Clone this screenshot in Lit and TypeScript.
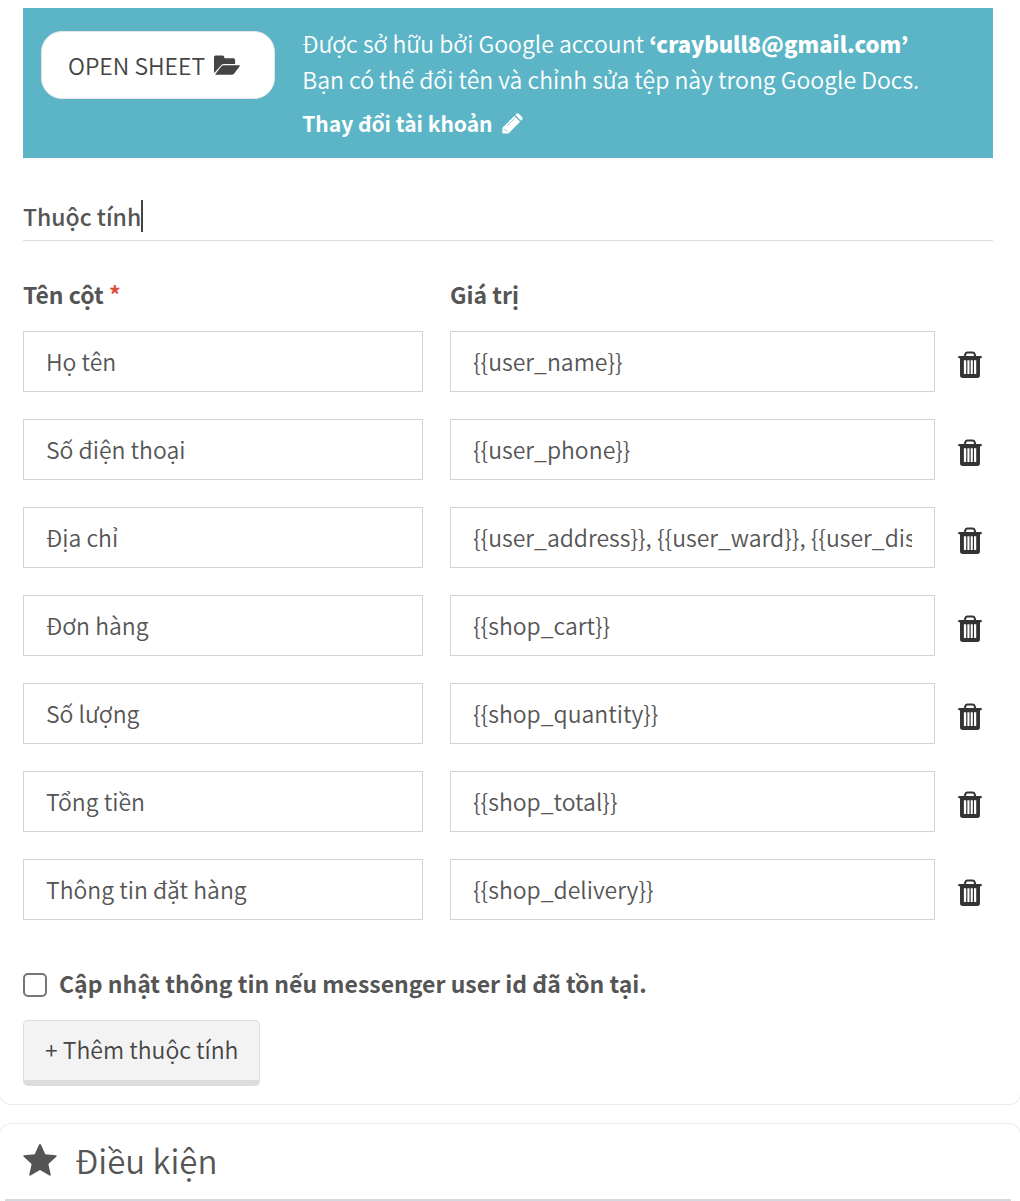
import { LitElement, html, css, svg } from "lit";
import { customElement, state } from "lit/decorators.js";

interface Attribute {
  name: string;
  value: string;
}

const folderIcon = html`<svg class="icon-folder" viewBox="0 0 26 20" aria-hidden="true">
  ${svg`<path fill="currentColor" d="M0 2Q0 .4 1.600.4H8.300Q9.700.4 10.100 1.800L10.500 3.300H19.500Q21.100 3.300 21.100 4.900V9H10.200Q8.200 9 6.900 10.400L.5 17.700Q0 18 0 17.300zM9.600 10.300H25.300Q26.300 10.300 25.700 11.300L20.400 18.300Q19.200 19.800 17.600 19.800H1.500Q1 19.800 1.300 19.300L7.200 11.600Q8.200 10.300 9.600 10.300z"/>`}
</svg>`;

const pencilIcon = html`<svg class="icon-pencil" viewBox="0 0 21 21" aria-hidden="true">
  ${svg`<path fill="currentColor" d="M12.300 2.900 18.100 8.700 6.800 20.200 5.800 20.600H.4V15.200L.9 14.200zM13.300 1.900 14.500.8Q15.700-.2 16.900.9L20.100 4.100Q21.200 5.300 20.200 6.500L19.100 7.700z"/>
  <path fill="none" stroke="#5bb5c6" stroke-width=".7" d="M5.300 12.700 12.700 5.300"/>
  <path fill="#5bb5c6" d="M2.700 15.800 5.300 18.300 4.200 18.500 3.900 17.200 2.500 16.900z"/>`}
</svg>`;

const trashIcon = html`<svg class="icon-trash" viewBox="0 0 24 28" aria-hidden="true">
  ${svg`<path fill="none" stroke="currentColor" stroke-width="2" d="M6.600 5.500 7.600 2.600Q8 1.400 9.200 1.400h5.600q1.200 0 1.600 1.200l1 2.900"/>
  <path fill="currentColor" fill-rule="evenodd" d="M1 5h22q.8 0 .8.8v.7q0 .7-.8.700h-1V24q0 3-2.600 3H4.600Q2 27 2 24V7.200H1q-.8 0-.8-.7v-.7Q.2 5 1 5zM5.900 9.300V23h2.300V9.300zM9.400 9.300V23h2.100V9.300zM12.700 9.300V23h2.100V9.300zM16 9.300V23h2.200V9.300z"/>`}
</svg>`;

const starIcon = html`<svg class="icon-star" viewBox="0 0 34 32" aria-hidden="true">
  ${svg`<path fill="currentColor" d="M17 0Q17.600 0 18 .8L22.300 10.200 32.900 11.300Q34.300 11.600 33.300 12.700L25.400 19.900 27.700 30.600Q27.800 32 26.500 31.500L17 26 7.500 31.500Q6.200 32 6.300 30.600L8.600 19.900.7 12.700Q-.3 11.600 1.100 11.300L11.700 10.200 16 .8Q16.400 0 17 0z"/>`}
</svg>`;

@customElement("app-root")
export class AppRoot extends LitElement {
  static styles = css`
    :host {
      display: block;
      overflow: hidden;
      background: #fff;
      color: #555;
      font: 350 23px/36px "Noto Sans CJK KR", "Noto Sans", sans-serif;
    }
    * {
      box-sizing: border-box;
    }
    button,
    input {
      font: inherit;
      color: inherit;
    }
    button {
      cursor: pointer;
    }
    svg {
      display: block;
      flex: none;
    }
    .card {
      margin: 0 -1px;
      border: 1px solid #ebebeb;
      border-radius: 12px;
    }
    .attributes {
      padding: 8px 27px 18px 23px;
      border-top: 0;
      border-top-left-radius: 0;
      border-top-right-radius: 0;
    }
    .banner {
      display: flex;
      align-items: flex-start;
      gap: 27px;
      padding: 17px 18px;
      background: #5bb5c6;
      color: #fff;
    }
    .open {
      display: flex;
      flex: none;
      align-items: center;
      gap: 9px;
      margin-top: 6px;
      padding: 15px 34px 15px 26px;
      border: 1px solid #e6e6e6;
      border-radius: 21px;
      background: #fff;
      color: #444;
    }
    .banner p {
      margin: 0;
    }
    .change {
      display: inline-flex;
      align-items: center;
      gap: 9px;
      margin-top: 8px;
      color: inherit;
      font-size: 21px;
      font-weight: 700;
      text-decoration: none;
    }
    .owner strong {
      font-size: 22px;
      font-weight: 900;
    }
    .icon-folder {
      width: 26px;
      height: 20px;
    }
    .icon-pencil {
      width: 21px;
      height: 21px;
    }
    .icon-trash {
      width: 24px;
      height: 28px;
    }
    .icon-star {
      width: 34px;
      height: 32px;
    }
    .title {
      display: flex;
      align-items: center;
      margin: 0;
      padding: 41px 0 7px;
      border-bottom: 1px solid #dcdcdc;
      font-size: 23px;
      font-weight: 500;
    }
    .title span {
      line-height: 34px;
    }
    .title .caret {
      width: 2px;
      height: 32px;
      background: #444;
    }
    .row {
      display: flex;
      margin-bottom: 27px;
    }
    .head {
      margin: 35px 0 19px;
      font-weight: 700;
    }
    .name {
      flex: 354 1 46px;
      min-width: 0;
      margin-right: 27px;
    }
    .value {
      flex: 439 1 46px;
      min-width: 0;
    }
    .field {
      height: 61px;
      padding: 0 22px 2px;
      border: 1px solid #d3d3dc;
      border-radius: 0;
      background: #fff;
      outline: 0;
    }
    .remove {
      display: flex;
      flex: none;
      align-items: center;
      width: 58px;
      padding: 6px 0 0 23px;
      border: 0;
      background: none;
      color: #333;
    }
    .required {
      color: #dd4b39;
    }
    .update {
      display: flex;
      align-items: center;
      gap: 12px;
      margin: 47px 0 17px;
      font-weight: 700;
    }
    .update label {
      padding-bottom: 4px;
      line-height: 32px;
    }
    .tick {
      appearance: none;
      width: 24px;
      height: 24px;
      margin: 0;
      border: 2px solid #767676;
      border-radius: 5px;
      background: #fff;
    }
    .tick:checked {
      background: #5bb5c6;
    }
    .add {
      padding: 10px 21px 13px;
      border: 1px solid #ddd;
      border-bottom: 6px solid #ddd;
      border-radius: 5px;
      background: #f3f3f3;
      color: #444;
    }
    .conditions {
      margin-top: 18px;
      padding: 12px 9px 0 5px;
      border-bottom: 0;
      border-bottom-left-radius: 0;
      border-bottom-right-radius: 0;
    }
    .heading {
      display: flex;
      align-items: center;
      gap: 18px;
      margin: 0;
      padding: 0 18px 15px;
      border-bottom: 2px solid #d5d9dd;
      font-size: 33px;
      font-weight: 350;
      line-height: 48px;
    }
  `;

  @state() private attributesList: Attribute[] = [
    { name: "Họ tên", value: "{{user_name}}" },
    { name: "Số điện thoại", value: "{{user_phone}}" },
    { name: "Địa chỉ", value: "{{user_address}}, {{user_ward}}, {{user_district}}" },
    { name: "Đơn hàng", value: "{{shop_cart}}" },
    { name: "Số lượng", value: "{{shop_quantity}}" },
    { name: "Tổng tiền", value: "{{shop_total}}" },
    { name: "Thông tin đặt hàng", value: "{{shop_delivery}}" },
  ];

  private add() {
    this.attributesList = [...this.attributesList, { name: "", value: "" }];
  }

  private remove(item: Attribute) {
    this.attributesList = this.attributesList.filter((a) => a !== item);
  }

  private renderRow(item: Attribute) {
    return html`<div class="row">
      <input class="field name" type="text" aria-labelledby="name-label" .value=${item.name} />
      <input class="field value" type="text" aria-labelledby="value-label" .value=${item.value} />
      <button class="remove" type="button" aria-label="Xóa" @click=${() => this.remove(item)}>${trashIcon}</button>
    </div>`;
  }

  render() {
    return html`
      <section class="card attributes">
        <div class="banner">
          <button class="open" type="button"><span>OPEN SHEET</span>${folderIcon}</button>
          <div class="owner">
            <p>Được sở hữu bởi Google account <strong>‘craybull8@gmail.com’</strong></p>
            <p>Bạn có thể đổi tên và chỉnh sửa tệp này trong Google Docs.</p>
            <a class="change" href="#account"><span>Thay đổi tài khoản</span>${pencilIcon}</a>
          </div>
        </div>
        <h2 class="title"><span>Thuộc tính</span><span class="caret"></span></h2>
        <div class="row head">
          <span class="name" id="name-label">Tên cột <span class="required">*</span></span>
          <span class="value" id="value-label">Giá trị</span>
          <span class="remove"></span>
        </div>
        ${this.attributesList.map((item) => this.renderRow(item))}
        <div class="update">
          <input class="tick" type="checkbox" id="update" />
          <label for="update">Cập nhật thông tin nếu messenger user id đã tồn tại.</label>
        </div>
        <button class="add" type="button" @click=${this.add}>+ Thêm thuộc tính</button>
      </section>
      <section class="card conditions">
        <h2 class="heading">${starIcon}<span>Điều kiện</span></h2>
      </section>
    `;
  }
}
